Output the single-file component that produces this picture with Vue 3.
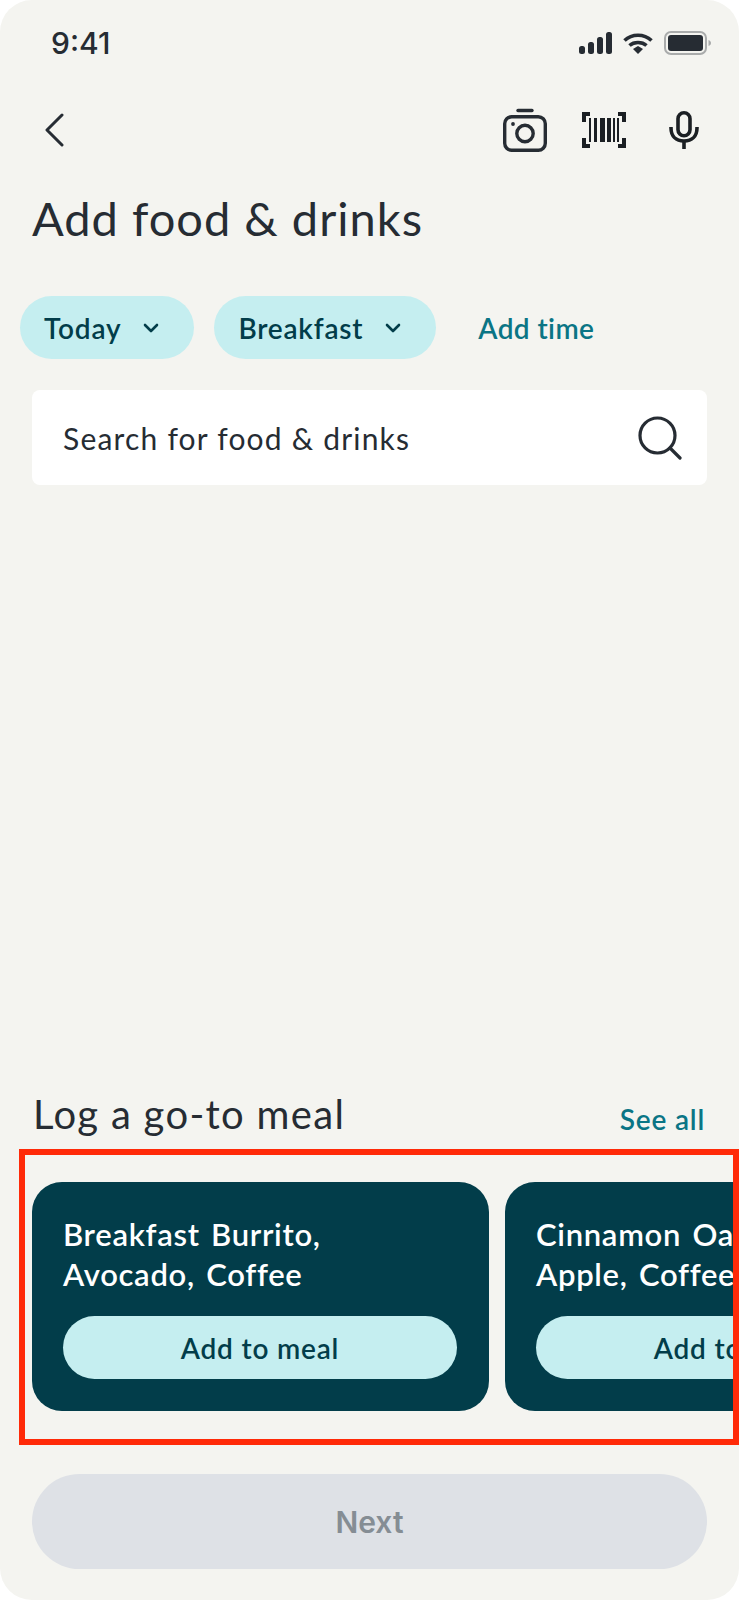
<script setup>
import { ref } from "vue";

const chips = ref(["Today", "Breakfast"]);
const meals = ref([
  { id: 1, lines: ["Breakfast Burrito,", "Avocado, Coffee"] },
  { id: 2, lines: ["Cinnamon Oatmeal,", "Apple, Coffee"] },
]);
</script>

<template>
  <div class="screen">
    <div class="status-bar">
      <span class="time">9:41</span>
      <div class="status-icons">
        <svg width="34" height="22" viewBox="0 0 34 22">
          <rect x="1" y="14" width="6" height="8" rx="2.5" fill="#262c33" />
          <rect x="10" y="10" width="6" height="12" rx="2.5" fill="#262c33" />
          <rect x="19" y="5" width="6" height="17" rx="2.5" fill="#262c33" />
          <rect x="28" y="0" width="6" height="22" rx="2.5" fill="#262c33" />
        </svg>
        <svg width="30" height="22" viewBox="0 0 30 22" fill="none">
          <path d="M1.5 8.5C9 1.5 21 1.5 28.5 8.5" stroke="#262c33" stroke-width="3.6" />
          <path d="M6.5 13.5C11 9.5 19 9.5 23.5 13.5" stroke="#262c33" stroke-width="3.6" />
          <path d="M10 17L15 14L20 17L15 22Z" fill="#262c33" />
        </svg>
        <svg width="48" height="24" viewBox="0 0 48 24" fill="none">
          <rect x="1" y="1" width="41" height="22" rx="6" stroke="#a9abab" stroke-width="2" />
          <rect x="4" y="4" width="35" height="16" rx="3" fill="#262c33" />
          <path d="M44.5 9C46 9.5 47 10.5 47 12C47 13.5 46 14.5 44.5 15Z" fill="#a9abab" />
        </svg>
      </div>
    </div>

    <div class="nav">
      <svg class="back" width="20" height="34" viewBox="0 0 20 34" fill="none">
        <path d="M18 2L3 17L18 32" stroke="#262c33" stroke-width="3" stroke-linecap="round" stroke-linejoin="round" />
      </svg>
      <div class="nav-actions">
        <svg width="44" height="44" viewBox="0 0 44 44" fill="none">
          <path d="M15 2.5H29" stroke="#262c33" stroke-width="3.4" stroke-linecap="round" />
          <rect x="1.7" y="8.7" width="40.6" height="33.6" rx="7" stroke="#262c33" stroke-width="3.4" />
          <circle cx="22" cy="25.5" r="8.2" stroke="#262c33" stroke-width="3.4" />
          <circle cx="10" cy="16" r="1.9" fill="#262c33" />
        </svg>
        <svg width="44" height="36" viewBox="0 0 44 36" fill="none">
          <path d="M8 2H2V10M36 2H42V10M8 34H2V26M36 34H42V26" stroke="#1b1f23" stroke-width="4" />
          <rect x="7" y="6" width="2" height="24" fill="#1b1f23" />
          <rect x="12" y="6" width="3" height="24" fill="#1b1f23" />
          <rect x="18" y="6" width="5" height="24" fill="#1b1f23" />
          <rect x="25" y="6" width="4" height="24" fill="#1b1f23" />
          <rect x="31" y="6" width="2" height="24" fill="#1b1f23" />
          <rect x="35" y="6" width="2" height="24" fill="#1b1f23" />
        </svg>
        <svg class="mic" width="30" height="38" viewBox="0 0 30 38" fill="none">
          <rect x="9" y="1.8" width="12" height="23" rx="6" stroke="#1b1f23" stroke-width="3.6" />
          <path d="M2 16V17C2 25 7 30 15 30C23 30 28 25 28 17V16" stroke="#1b1f23" stroke-width="3.6" />
          <path d="M15 30V38" stroke="#1b1f23" stroke-width="3.6" />
        </svg>
      </div>
    </div>

    <h1 class="title">Add food &amp; drinks</h1>

    <div class="filters">
      <div v-for="chip in chips" :key="chip" class="chip">
        <span>{{ chip }}</span>
        <svg width="16" height="10" viewBox="0 0 16 10" fill="none">
          <path d="M2 2L8 8L14 2" stroke="#023d4a" stroke-width="2.6" stroke-linecap="round" stroke-linejoin="round" />
        </svg>
      </div>
      <span class="add-time">Add time</span>
    </div>

    <div class="search">
      <span>Search for food &amp; drinks</span>
      <svg width="44" height="44" viewBox="0 0 44 44" fill="none">
        <circle cx="19.5" cy="19.5" r="17.5" stroke="#262c33" stroke-width="3.2" />
        <path d="M32 32L42 42" stroke="#262c33" stroke-width="3.2" stroke-linecap="round" />
      </svg>
    </div>

    <div class="spacer"></div>

    <div class="section-head">
      <h2>Log a go-to meal</h2>
      <span class="see-all">See all</span>
    </div>

    <div class="carousel">
      <div v-for="meal in meals" :key="meal.id" class="meal-card">
        <p v-for="line in meal.lines" :key="line">{{ line }}</p>
        <button>Add to meal</button>
      </div>
    </div>
    <div class="highlight"></div>

    <button class="next">Next</button>
  </div>
</template>

<style>
html,
body {
  margin: 0;
  background: #ffffff;
}
</style>

<style scoped>
.screen {
  position: relative;
  box-sizing: border-box;
  width: 739px;
  height: 1600px;
  padding-bottom: 31px;
  display: flex;
  flex-direction: column;
  overflow: hidden;
  background: #f4f4f0;
  border-radius: 32px;
  font-family: Lato, "Noto Sans", sans-serif;
  color: #262c33;
}

.status-bar {
  display: flex;
  justify-content: space-between;
  align-items: center;
  height: 26px;
  padding: 30px 27px 0 51px;
}

.time {
  font-family: Inter, sans-serif;
  font-size: 30px;
  font-weight: 500;
}

.status-icons {
  display: flex;
  align-items: center;
  gap: 11px;
}

.nav {
  display: flex;
  justify-content: space-between;
  align-items: center;
  height: 46px;
  margin-top: 51px;
  padding: 0 40px 0 44px;
}

.nav-actions {
  display: flex;
  align-items: center;
  gap: 35px;
}

.mic {
  margin-left: 8px;
}

.title {
  margin: 37px 0 0 32px;
  font-size: 47px;
  line-height: 56px;
  font-weight: 400;
  letter-spacing: 1px;
}

.filters {
  display: flex;
  align-items: center;
  gap: 20px;
  margin: 50px 0 0 20px;
}

.chip {
  display: flex;
  align-items: center;
  gap: 22px;
  height: 63px;
  padding: 0 35px 0 24px;
  border-radius: 32px;
  background: #c5eef0;
  color: #023d4a;
  font-size: 28px;
  font-weight: 600;
  letter-spacing: 0.8px;
}

.add-time {
  margin-left: 22px;
  color: #0a7585;
  font-size: 28px;
  font-weight: 600;
  letter-spacing: 0.4px;
}

.search {
  display: flex;
  justify-content: space-between;
  align-items: center;
  height: 95px;
  margin: 31px 32px 0;
  padding: 0 25px 0 31px;
  border-radius: 8px;
  background: #ffffff;
  font-size: 30px;
  letter-spacing: 1.2px;
}

.spacer {
  flex: 1;
}

.section-head {
  display: flex;
  justify-content: space-between;
  align-items: center;
  margin: 0 34px 0 33px;
}

.section-head h2 {
  margin: 0;
  font-size: 40px;
  line-height: 48px;
  font-weight: 400;
  letter-spacing: 1.3px;
}

.see-all {
  margin-top: 10px;
  color: #0a7585;
  font-size: 28px;
  font-weight: 600;
  letter-spacing: 0.8px;
}

.carousel {
  display: flex;
  gap: 16px;
  margin-top: 44px;
  padding-left: 32px;
  overflow: hidden;
}

.meal-card {
  box-sizing: border-box;
  flex: 0 0 457px;
  height: 229px;
  padding: 32px 32px 0 31px;
  border-radius: 30px;
  background: #023d4a;
  color: #ffffff;
}

.meal-card p {
  margin: 0;
  font-size: 31px;
  line-height: 40px;
  font-weight: 600;
  letter-spacing: 0.7px;
  word-spacing: 3px;
  white-space: nowrap;
}

.meal-card button {
  display: block;
  width: 100%;
  height: 63px;
  margin-top: 22px;
  border: none;
  border-radius: 32px;
  background: #c5eef0;
  color: #023d4a;
  font-family: inherit;
  font-size: 28px;
  font-weight: 600;
  letter-spacing: 0.8px;
}

.highlight {
  position: absolute;
  left: 19px;
  top: 1149px;
  width: 720px;
  height: 296px;
  box-sizing: border-box;
  border: 6px solid #ff2a08;
}

.next {
  display: block;
  height: 95px;
  margin: 63px 32px 0;
  border: none;
  border-radius: 48px;
  background: #dee1e6;
  color: #858d94;
  font-family: Inter, sans-serif;
  font-size: 30px;
  font-weight: 600;
}
</style>
